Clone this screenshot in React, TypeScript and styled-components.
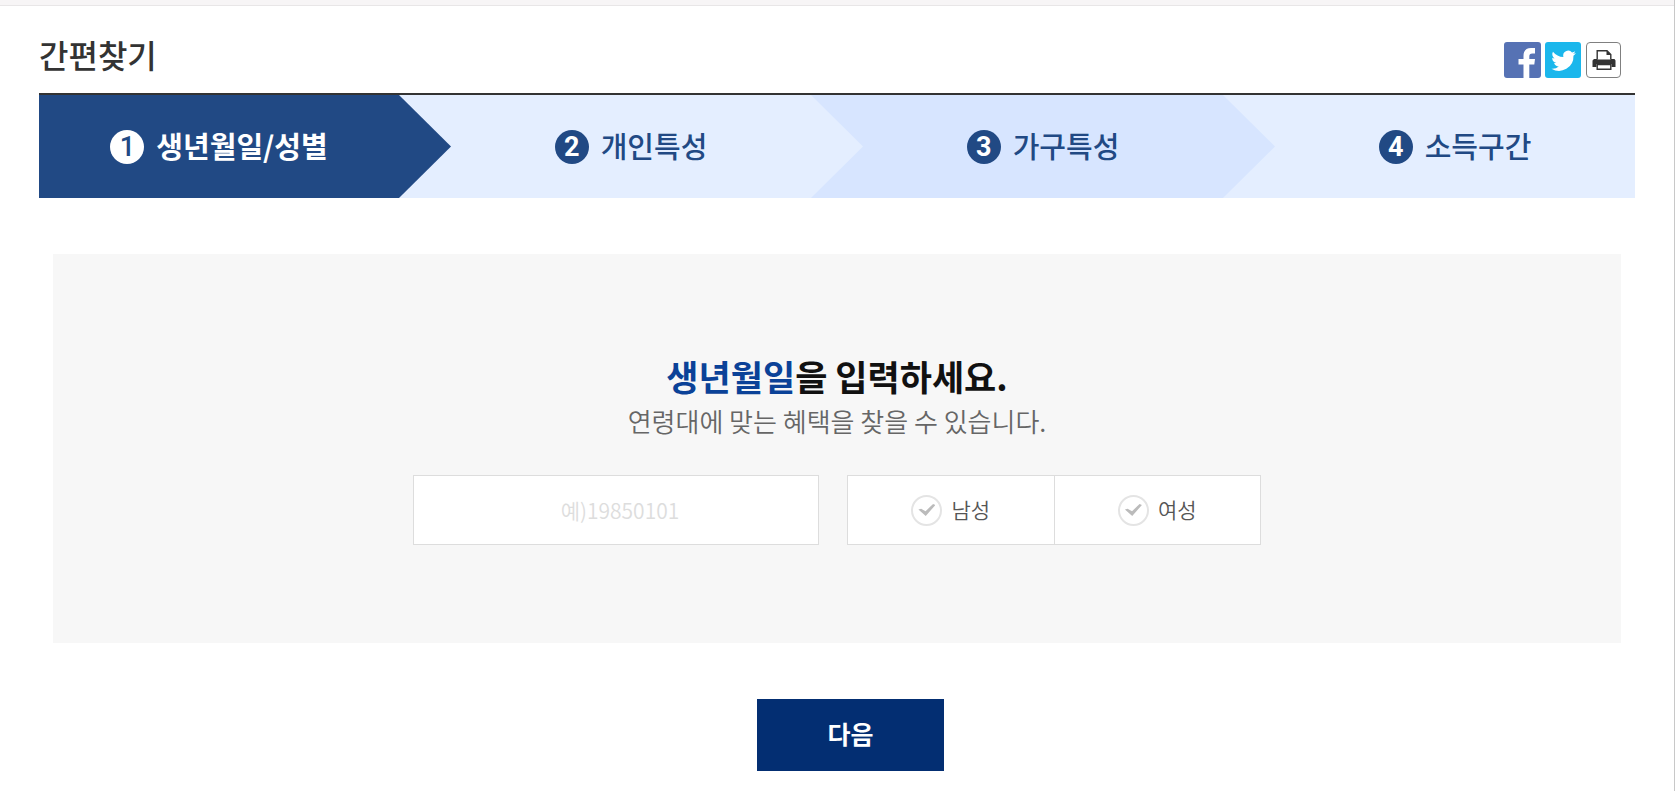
import React, { useState } from 'react';
import styled, { createGlobalStyle, css } from 'styled-components';

const GlobalStyle = createGlobalStyle`
  *, *::before, *::after { box-sizing: border-box; }
  html, body, #root { height: 100%; }
  body {
    margin: 0;
    background: #fff;
    color: #333;
    font-family: "Noto Sans CJK KR", "Noto Sans", sans-serif;
  }
`;

const Page = styled.div`
  min-height: 100%;
  border-right: 1px solid #c8c8c8;
`;

const TopStrip = styled.div`
  height: 6px;
  background: #f7f5f6;
  border-bottom: 1px solid #e8e6e7;
`;

const Content = styled.main`
  padding: 0 39px 18px;
`;

const Header = styled.header`
  display: flex;
  align-items: flex-end;
  justify-content: space-between;
  height: 89px;
  padding: 0 14px 15px 0;
  border-bottom: 2px solid #333;
`;

const Title = styled.h1`
  margin: 0;
  font-size: 32px;
  line-height: 48px;
  font-weight: 500;
`;

const Tools = styled.div`
  display: flex;
  gap: 4px;
`;

const ToolButton = styled.button`
  display: flex;
  padding: 0;
  border: 0;
  background: none;
  cursor: pointer;
`;

const Steps = styled.ol`
  display: flex;
  margin: 0;
  padding: 0;
  list-style: none;
`;

const Step = styled.li<{ $fill: string; $current?: boolean }>`
  position: relative;
  box-sizing: content-box;
  flex: 1 1 0;
  display: flex;
  align-items: center;
  justify-content: center;
  gap: 12px;
  height: 103px;
  font-size: 29px;
  line-height: 40px;
  font-weight: ${(p) => (p.$current ? 700 : 500)};
  color: ${(p) => (p.$current ? '#fff' : '#214984')};
  background: ${(p) => p.$fill};

  & + & { padding-left: 52px; }

  &:not(:last-child)::after {
    content: "";
    position: absolute;
    z-index: 1;
    top: 0;
    left: 100%;
    width: 52px;
    height: 100%;
    background: ${(p) => p.$fill};
    clip-path: polygon(0 0, 100% 50%, 0 100%);
  }
`;

const StepLabel = styled.span`
  padding-bottom: 4px;
`;

const StepNumber = styled.span<{ $current?: boolean }>`
  width: 34px;
  height: 34px;
  border-radius: 50%;
  text-align: center;
  font-family: Roboto, sans-serif;
  font-size: 27px;
  line-height: 34px;
  font-weight: ${(p) => (p.$current ? 500 : 700)};
  ${(p) => p.$current
    ? css`background: #fff; color: #214984;`
    : css`background: #214984; color: #fff;`}
`;

const Panel = styled.section`
  display: flex;
  flex-direction: column;
  align-items: center;
  margin: 56px 14px;
  padding: 98px 24px;
  background: #f7f7f7;
`;

const Question = styled.h2`
  margin: 0;
  font-size: 35px;
  line-height: 48px;
  font-weight: 700;
  color: #111;
  em { font-style: normal; color: #0b4298; }
`;

const Hint = styled.p`
  margin: 0 0 33px;
  font-size: 26px;
  line-height: 42px;
  font-weight: 350;
  color: #666;
`;

const Fields = styled.div`
  display: flex;
  gap: 28px;
`;

const BirthInput = styled.input`
  width: 406px;
  height: 70px;
  padding: 0 16px 0 24px;
  border: 1px solid #ddd;
  border-radius: 0;
  background: #fff;
  text-align: center;
  font: 350 21px "Noto Sans CJK KR", sans-serif;
  color: #333;
  &::placeholder { color: #ddd; opacity: 1; }
`;

const GenderGroup = styled.div`
  display: flex;
  width: 414px;
  height: 70px;
  border: 1px solid #ddd;
  background: #fff;
`;

const GenderOption = styled.label`
  flex: 1;
  display: flex;
  align-items: center;
  justify-content: center;
  gap: 9px;
  font-size: 21px;
  line-height: 32px;
  font-weight: 350;
  color: #555;
  cursor: pointer;
  & + & { border-left: 1px solid #ddd; }
`;

const GenderName = styled.span`
  padding-bottom: 2px;
`;

const Radio = styled.input`
  appearance: none;
  width: 31px;
  height: 31px;
  margin: 0;
  display: grid;
  place-items: center;
  border: 2px solid #e4e4e4;
  border-radius: 50%;
  color: #bbb;
  cursor: pointer;
  &::before {
    content: "";
    width: 17px;
    height: 12px;
    background: currentColor;
    clip-path: polygon(0 46%, 16% 40%, 42% 60%, 86% 0, 100% 8%, 43% 100%);
  }
  &:checked { color: #214984; border-color: #214984; }
`;

const Actions = styled.div`
  display: flex;
  justify-content: center;
  padding-left: 27px;
`;

const NextButton = styled.button`
  width: 187px;
  height: 72px;
  padding: 0 0 4px;
  border: 0;
  background: #032e72;
  color: #fff;
  font: 700 25px "Noto Sans CJK KR", sans-serif;
  cursor: pointer;
`;

const FacebookIcon = () => (
  <svg width="37" height="36" viewBox="0 0 37 36" aria-hidden="true">
    <rect width="37" height="36" rx="3" fill="#5672b4" />
    <path d="M19.5 36V22.5H14.5V17H19.5V14C19.5 8.5 22.5 6 27 6H31V11.5H28.5C26 11.5 25.3 12.5 25.3 14.5V17H31L30.3 22.5H25.3V36Z" fill="#fff" />
  </svg>
);

const TwitterIcon = () => (
  <svg width="36" height="36" viewBox="0 0 36 36" aria-hidden="true">
    <rect width="36" height="36" rx="3" fill="#1bb7ec" />
    <path transform="translate(5.600 7.600) scale(1.030)" d="M24.6 3.4a10 10 0 0 1-2.8.8 5 5 0 0 0 2.1-2.7 10 10 0 0 1-3.1 1.2 4.9 4.9 0 0 0-8.4 4.5A14 14 0 0 1 2.3 2a4.9 4.9 0 0 0 1.5 6.6 4.9 4.9 0 0 1-2.2-.6v.1a4.9 4.9 0 0 0 4 4.8 5 5 0 0 1-2.2.1 4.9 4.9 0 0 0 4.6 3.4A10 10 0 0 1 .8 18.5a14 14 0 0 0 21.4-12.5 10 10 0 0 0 2.4-2.6z" fill="#fff" />
  </svg>
);

const PrintIcon = () => (
  <svg width="36" height="36" viewBox="0 0 36 36" aria-hidden="true">
    <rect x="1.5" y="0.5" width="34" height="35" rx="3.5" fill="#fff" stroke="#808080" />
    <path d="M9 17H29.5L30.5 18.5V25H26.5V22H11.5V25H7.5V18.5Z" fill="#333" />
    <path d="M12.2 17.5V8.7H22L25.8 12.5V17.5" fill="#fff" stroke="#333" strokeWidth="1.4" />
    <path d="M21.5 8.5V13H26Z" fill="#333" />
    <path d="M12.2 22.5H25.8V27.2H12.2Z" fill="#fff" stroke="#333" strokeWidth="1.4" />
  </svg>
);

const steps = [
  { label: '생년월일/성별', fill: '#214984' },
  { label: '개인특성', fill: '#e4eeff' },
  { label: '가구특성', fill: '#d7e5ff' },
  { label: '소득구간', fill: '#e4eeff' },
];

export default function App() {
  const [gender, setGender] = useState('');
  return (
    <>
      <GlobalStyle />
      <Page>
        <TopStrip />
        <Content>
          <Header>
            <Title>간편찾기</Title>
            <Tools>
              <ToolButton type="button" aria-label="페이스북 공유"><FacebookIcon /></ToolButton>
              <ToolButton type="button" aria-label="트위터 공유"><TwitterIcon /></ToolButton>
              <ToolButton type="button" aria-label="인쇄"><PrintIcon /></ToolButton>
            </Tools>
          </Header>
          <Steps>
            {steps.map((s, i) => (
              <Step key={s.label} $fill={s.fill} $current={i === 0} aria-current={i === 0 ? 'step' : undefined}>
                <StepNumber $current={i === 0}>{i + 1}</StepNumber>
                <StepLabel>{s.label}</StepLabel>
              </Step>
            ))}
          </Steps>
          <Panel>
            <Question><em>생년월일</em>을 입력하세요.</Question>
            <Hint>연령대에 맞는 혜택을 찾을 수 있습니다.</Hint>
            <Fields>
              <BirthInput type="text" inputMode="numeric" aria-label="생년월일" placeholder="예)19850101" />
              <GenderGroup role="radiogroup" aria-label="성별">
                {['남성', '여성'].map((g) => (
                  <GenderOption key={g}>
                    <Radio type="radio" name="gender" value={g} checked={gender === g} onChange={() => setGender(g)} />
                    <GenderName>{g}</GenderName>
                  </GenderOption>
                ))}
              </GenderGroup>
            </Fields>
          </Panel>
          <Actions>
            <NextButton type="button">다음</NextButton>
          </Actions>
        </Content>
      </Page>
    </>
  );
}
